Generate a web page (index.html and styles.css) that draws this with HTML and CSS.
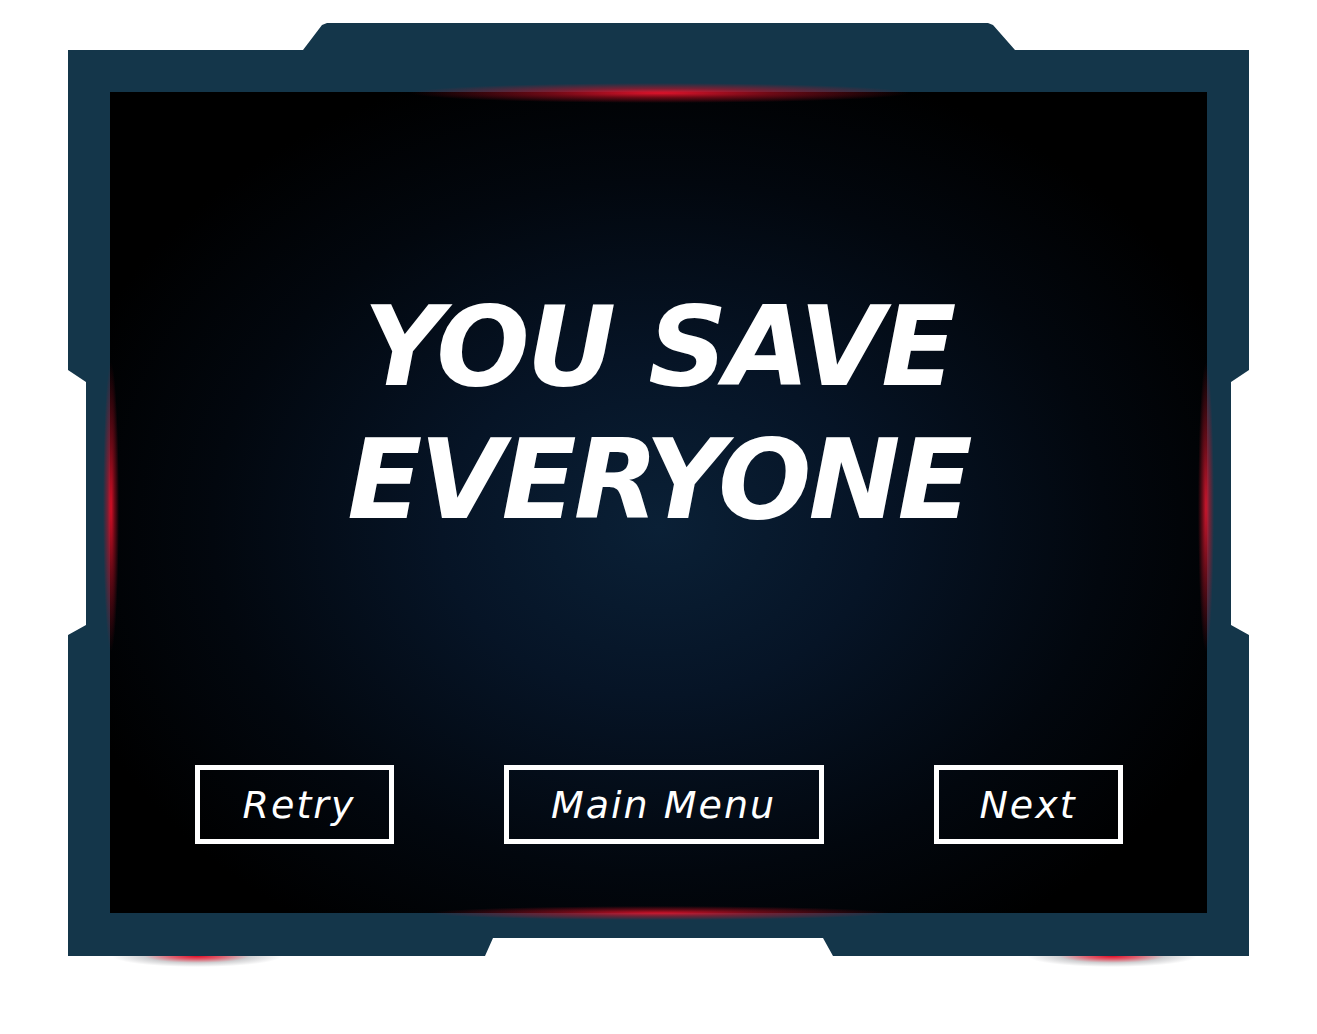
FILE: index.html
```html
<!DOCTYPE html>
<html lang="en">
<head>
<meta charset="utf-8">
<title>You Save Everyone</title>
<link rel="stylesheet" href="styles.css">
</head>
<body>
<div class="scene">
  <div class="frame">
    <div class="screen">
      <span class="edge edge-top"></span>
      <span class="edge edge-bottom"></span>
      <span class="edge edge-left"></span>
      <span class="edge edge-right"></span>
      <h1 class="title">YOU SAVE<br>EVERYONE</h1>
      <div class="actions">
        <button class="btn btn-retry">Retry</button>
        <button class="btn btn-menu">Main Menu</button>
        <button class="btn btn-next">Next</button>
      </div>
    </div>
  </div>
  <div class="shadows">
    <span class="under-glow"></span>
    <span class="under-glow"></span>
  </div>
</div>
</body>
</html>
```

FILE: styles.css
```css
html, body {
  margin: 0;
  padding: 0;
  background: #ffffff;
}

body {
  font-family: "DejaVu Sans", "Liberation Sans", sans-serif;
  min-height: 1034px;
}

.scene {
  width: 1181px;
  margin: 23px 0 0 68px;
}

.frame {
  position: relative;
  width: 1181px;
  height: 933px;
  box-sizing: border-box;
  padding: 69px 42px 43px 42px;
  background: #14364a;
  clip-path: polygon(
    0 27px, 235px 27px, 254px 2px, 259px 0, 920px 0, 925px 2px, 947px 27px, 1181px 27px,
    1181px 347px, 1163px 359px, 1163px 602px, 1181px 612px, 1181px 933px,
    765px 933px, 755px 915px, 425px 915px, 417px 933px, 0 933px,
    0 612px, 18px 602px, 18px 359px, 0 347px
  );
}

.shadows {
  display: flex;
  justify-content: space-between;
  padding: 0 52px 0 44px;
  height: 12px;
}

.under-glow {
  display: block;
  width: 170px;
  height: 12px;
  background: radial-gradient(ellipse 85px 11px at 50% 0, rgba(225, 10, 35, 1) 0%, rgba(215, 40, 60, 0.75) 30%, rgba(150, 150, 155, 0.45) 62%, rgba(210, 210, 210, 0) 100%);
}

.screen {
  position: relative;
  height: 100%;
  box-sizing: border-box;
  padding-top: 189px;
  background: radial-gradient(ellipse 620px 480px at 50% 53%, #0a2036 0%, #061426 35%, #02070e 72%, #000000 100%);
  display: flex;
  flex-direction: column;
  align-items: center;
}

.edge {
  position: absolute;
  pointer-events: none;
}

.edge-top {
  top: -9px;
  left: 300px;
  width: 500px;
  height: 20px;
  background: radial-gradient(closest-side, rgba(235, 20, 45, 0.95) 0%, rgba(200, 15, 35, 0.55) 45%, rgba(200, 15, 35, 0) 100%);
}

.edge-bottom {
  bottom: -7px;
  left: 320px;
  width: 460px;
  height: 14px;
  background: radial-gradient(closest-side, rgba(235, 20, 45, 0.85) 0%, rgba(200, 15, 35, 0.5) 45%, rgba(200, 15, 35, 0) 100%);
}

.edge-left {
  left: -7px;
  top: 270px;
  width: 16px;
  height: 290px;
  background: radial-gradient(closest-side, rgba(225, 15, 40, 0.95) 0%, rgba(190, 15, 35, 0.55) 45%, rgba(190, 15, 35, 0) 100%);
}

.edge-right {
  right: -7px;
  top: 270px;
  width: 16px;
  height: 290px;
  background: radial-gradient(closest-side, rgba(225, 25, 50, 0.9) 0%, rgba(190, 20, 40, 0.55) 45%, rgba(190, 20, 40, 0) 100%);
}

.title {
  margin: 0;
  color: #ffffff;
  font-family: "DejaVu Sans", sans-serif;
  font-weight: bold;
  font-style: italic;
  font-size: 110px;
  line-height: 133px;
  letter-spacing: -3px;
  text-align: center;
}

.actions {
  margin-top: 218px;
  display: flex;
  gap: 110px;
  justify-content: center;
}

.btn {
  box-sizing: border-box;
  height: 79px;
  border: 5px solid #ffffff;
  background: transparent;
  color: #ffffff;
  font-family: "DejaVu Sans", sans-serif;
  font-style: italic;
  font-weight: normal;
  font-size: 38px;
  letter-spacing: 2px;
  line-height: 67px;
  padding: 2px 0 0 0;
  text-align: center;
  cursor: pointer;
}

.btn-retry {
  width: 199px;
  padding-left: 10px;
}

.btn-menu {
  width: 320px;
}

.btn-next {
  width: 189px;
}
```
